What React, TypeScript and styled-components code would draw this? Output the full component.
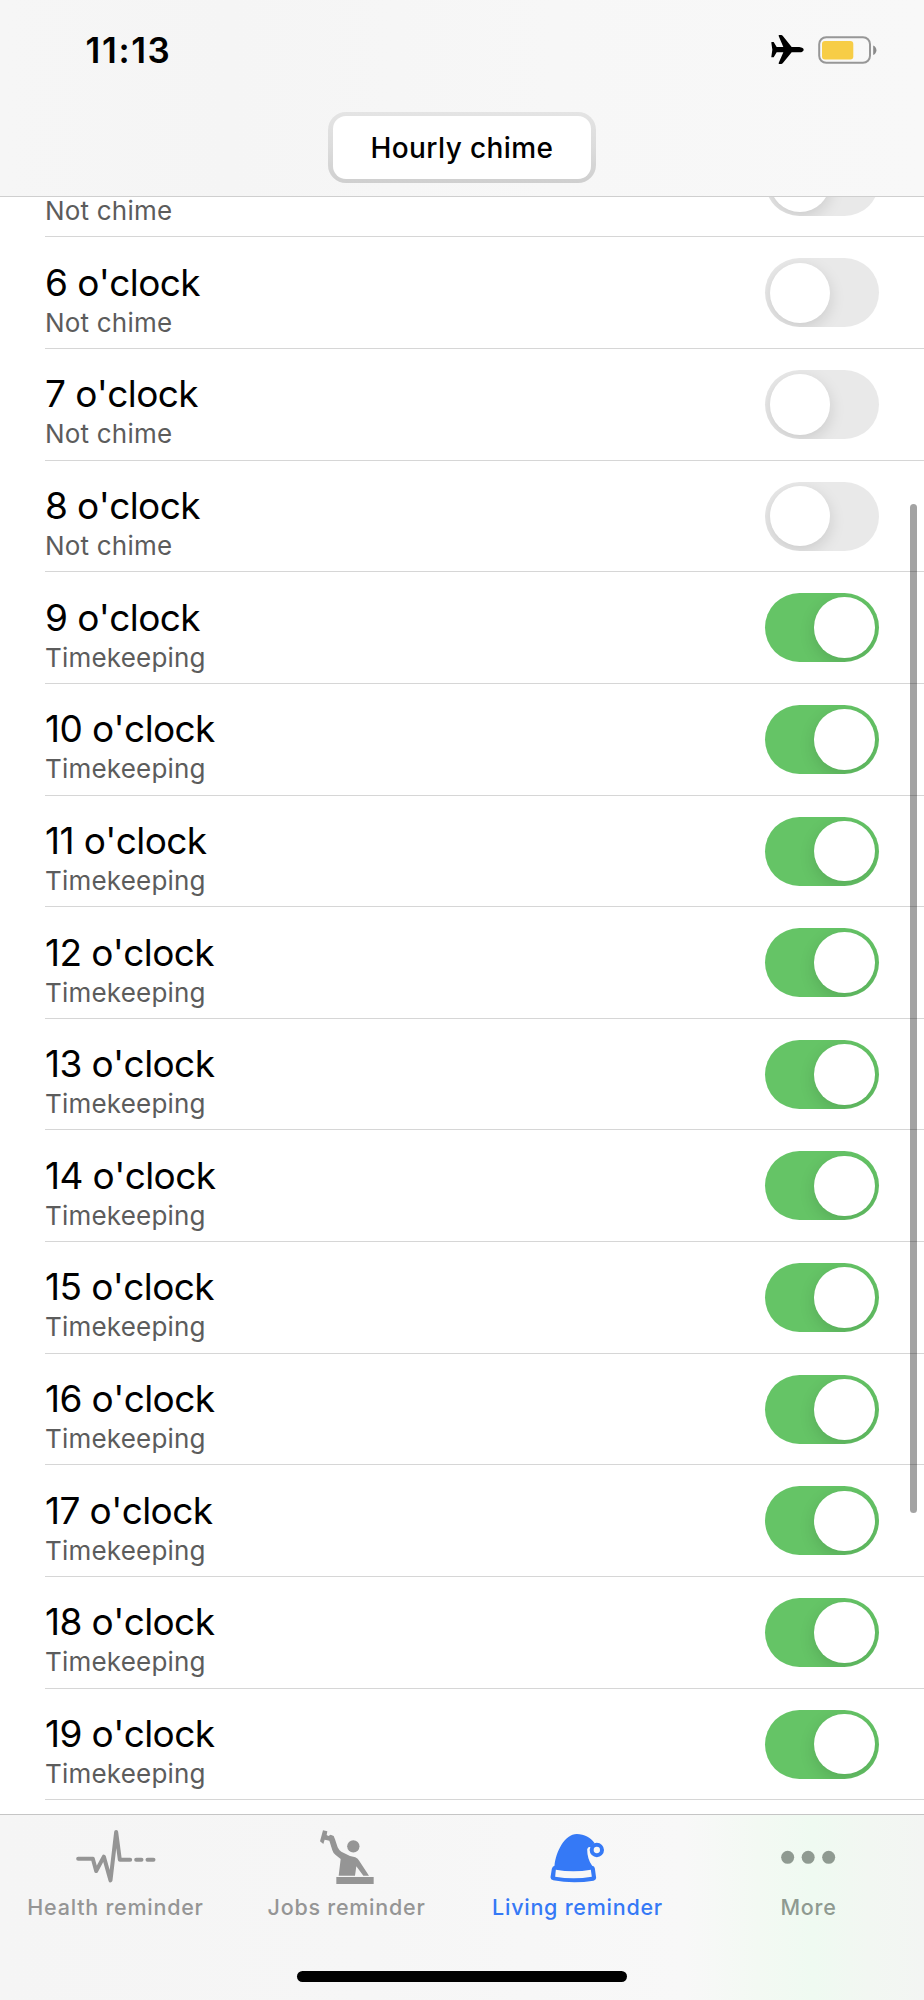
import React from "react";
import styled, { createGlobalStyle } from "styled-components";

const GlobalStyle = createGlobalStyle`
  *, *::before, *::after { box-sizing: border-box; }
  html, body { margin: 0; padding: 0; background: #fff; }
`;

const Screen = styled.div`
  position: relative;
  display: flex;
  flex-direction: column;
  width: 924px;
  height: 2000px;
  overflow: hidden;
  background: #fff;
  color: #000;
  font-family: Inter, "Liberation Sans", sans-serif;
`;

const Header = styled.header`
  flex: none;
  height: 197px;
  background: linear-gradient(90deg, #f6f6f6, #f5f5f5 25%, #f7f7f7 60%, #f8f8f8);
  border-bottom: 1px solid #cfcfcf;
`;

const StatusBar = styled.div`
  display: flex;
  align-items: center;
  justify-content: space-between;
  height: 112px;
  padding: 0 46px 12px 85.6px;
`;

const Clock = styled.time`
  font-size: 35px;
  font-weight: 600;
  line-height: 42px;
  letter-spacing: 1.6px;
`;

const StatusIcons = styled.div`
  display: flex;
  align-items: center;
  gap: 14px;
`;

const TitleRow = styled.div`
  display: flex;
  justify-content: center;
`;

const Segmented = styled.div`
  width: 268px;
  height: 71px;
  padding: 4px 5px;
  border-radius: 18px;
  background: linear-gradient(#e4e4e4, #dcdcdc 50%, #cfcfcf);
`;

const Segment = styled.button`
  display: block;
  width: 258px;
  height: 63px;
  padding: 1px 0 0;
  border: 0;
  border-radius: 13px;
  background: #fff;
  color: #000;
  font-family: inherit;
  font-size: 28px;
  font-weight: 500;
  letter-spacing: 0.4px;
  line-height: 62px;
`;

const List = styled.ul`
  flex: 1;
  min-height: 0;
  margin: 0;
  padding: 0;
  overflow: hidden;
  list-style: none;
`;

const Row = styled.li`
  display: flex;
  align-items: center;
  justify-content: space-between;
  height: 111.65px;
  margin-left: 45px;
  padding-right: 45px;
  border-bottom: 1px solid #d6d6d6;

  &:first-child {
    margin-top: -71.3px;
  }
`;

const RowText = styled.div`
  display: flex;
  flex-direction: column;
  padding-top: 15px;
`;

const RowTitle = styled.span`
  font-size: 37px;
  line-height: 44px;
  letter-spacing: -0.6px;
  font-kerning: none;
  white-space: nowrap;
`;

const RowStatus = styled.span`
  color: #5c5c5c;
  font-size: 26px;
  line-height: 35px;
  letter-spacing: 0.2px;
  white-space: nowrap;
`;

const Toggle = styled.button<{ $on: boolean }>`
  display: flex;
  align-items: center;
  justify-content: ${(p) => (p.$on ? "flex-end" : "flex-start")};
  width: 114px;
  height: 69px;
  margin-top: 0.4px;
  padding: 0 4px 0 4.6px;
  overflow: hidden;
  border: 0;
  border-radius: 35px;
  background: ${(p) => (p.$on ? "#65c466" : "#e9e9e9")};
`;

const Knob = styled.span`
  width: 60.6px;
  height: 60.6px;
  border-radius: 50%;
  background: #fff;
  box-shadow: 0 5px 16px rgba(0, 0, 0, 0.13);
`;

const ScrollThumb = styled.div`
  position: absolute;
  top: 504px;
  right: 7px;
  width: 7px;
  height: 1009px;
  border-radius: 4px;
  background: rgba(0, 0, 0, 0.36);
`;

const Footer = styled.footer`
  flex: none;
  height: 186px;
  border-top: 1px solid #c5c5c5;
  background: linear-gradient(90deg, #f5f5f5, #f6f6f6 40%, #f8f8f8 74%, #f3f9f3 82%, #effaf1 88%, #f2f7f2 94%, #f3f5f3);
`;

const Tabs = styled.nav`
  display: grid;
  grid-template-columns: repeat(4, 1fr);
  height: 156px;
  padding-top: 5px;
`;

const Tab = styled.a<{ $color: string }>`
  display: flex;
  flex-direction: column;
  align-items: center;
  color: ${(p) => p.$color};
`;

const TabLabel = styled.span`
  font-size: 21.5px;
  font-weight: 500;
  line-height: 24px;
  letter-spacing: 0.75px;
  white-space: nowrap;
`;

const HomeIndicator = styled.div`
  width: 330px;
  height: 11px;
  margin: 0 auto;
  border-radius: 6px;
  background: #000;
`;

const Airplane = () => (
  <svg width="33" height="30" viewBox="0 0 99 90">
    <path
      d="M1 23 Q0 21 3 21 L8 21 L17 36 L37 36 L23 3 Q22 0 25 0 L31 0 Q33 0 35 2 L62 36 L85 36 Q98 38 98 44 Q98 51 85 52 L62 52 L35 85 Q33 87 31 87 L25 87 Q22 87 23 84 L37 52 L17 52 L8 67 L3 67 Q0 67 1 65 L4 44 Z"
      fill="#000"
    />
  </svg>
);

const Battery = () => (
  <svg width="60" height="30" viewBox="0 0 60 30">
    <rect x="1.2" y="2.2" width="50.8" height="25.6" rx="7" fill="none" stroke="#979797" strokeWidth="2" />
    <rect x="4" y="6" width="31.3" height="18.6" rx="3" fill="#f7cd46" />
    <path d="M55.2 10.5 Q58.4 12 58.4 15.2 Q58.4 18.4 55.2 20 Z" fill="#8b8b8b" />
  </svg>
);

const PulseIcon = () => (
  <svg width="110" height="75" viewBox="2.5 0 330 225" fill="none" stroke="currentColor" strokeWidth="12" strokeLinecap="round" strokeLinejoin="round">
    <path d="M54 116 H98 L108 153 L131 110 L151 181 L168 36 L179 119 H210 M228 119 H244 M262 119 H280" />
  </svg>
);

const WorkerIcon = () => (
  <svg width="110" height="75" viewBox="-24 0 330 225" fill="currentColor">
    <path d="M69 31 L82 34 L80 45 L85 48 L92 44 L101 48 L105 58 L113 82 Q117 91 124 95 L150 108 L166 112 Q174 116 178 123 L207 167 L190 167 L169 139 L165 167 L116 167 L122 117 L107 105 Q99 99 97 91 L88 62 L78 60 L74 59 L70 72 L60 64 Z" />
    <circle cx="160" cy="79" r="18.5" />
    <rect x="109" y="171" width="112" height="21" />
  </svg>
);

const HatIcon = () => (
  <svg width="110" height="75" viewBox="-21.5 0 330 225">
    <path
      d="M73 137 C77 95 104 42 140 42 C163 42 181 53 193 69 L181 82 Q174 79 171 88 C171 108 176 124 186 137 Q193 138 194 145 L198 174 Q197 181 190 182 Q130 192 69 181 Q61 179 61 172 L65 146 Q67 138 73 137 Z"
      fill="currentColor"
    />
    <path d="M77 149 Q130 159 182 149 L185 170 Q130 180 75 170 Z" fill="#f7f7f7" />
    <circle cx="200" cy="90" r="15.5" fill="#f7f7f7" stroke="currentColor" strokeWidth="12" />
  </svg>
);

const MoreIcon = () => (
  <svg width="110" height="75" viewBox="2 0 330 225" fill="currentColor">
    <circle cx="103" cy="112" r="19.5" />
    <circle cx="164.5" cy="112" r="19.5" />
    <circle cx="226" cy="112" r="19.5" />
  </svg>
);

const hours = Array.from({ length: 15 }, (_, i) => i + 5);

const tabs = [
  { label: "Health reminder", color: "#959595", Icon: PulseIcon },
  { label: "Jobs reminder", color: "#959595", Icon: WorkerIcon },
  { label: "Living reminder", color: "#3579f6", Icon: HatIcon },
  { label: "More", color: "#8f9a91", Icon: MoreIcon },
];

export default function App() {
  return (
    <Screen>
      <GlobalStyle />
      <Header>
        <StatusBar>
          <Clock>11:13</Clock>
          <StatusIcons>
            <Airplane />
            <Battery />
          </StatusIcons>
        </StatusBar>
        <TitleRow>
          <Segmented>
            <Segment>Hourly chime</Segment>
          </Segmented>
        </TitleRow>
      </Header>
      <List>
        {hours.map((hour) => {
          const on = hour >= 9;
          return (
            <Row key={hour}>
              <RowText>
                <RowTitle>{hour} o'clock</RowTitle>
                <RowStatus>{on ? "Timekeeping" : "Not chime"}</RowStatus>
              </RowText>
              <Toggle $on={on} role="switch" aria-checked={on}>
                <Knob />
              </Toggle>
            </Row>
          );
        })}
      </List>
      <Footer>
        <Tabs>
          {tabs.map(({ label, color, Icon }) => (
            <Tab key={label} $color={color}>
              <Icon />
              <TabLabel>{label}</TabLabel>
            </Tab>
          ))}
        </Tabs>
        <HomeIndicator />
      </Footer>
      <ScrollThumb />
    </Screen>
  );
}
